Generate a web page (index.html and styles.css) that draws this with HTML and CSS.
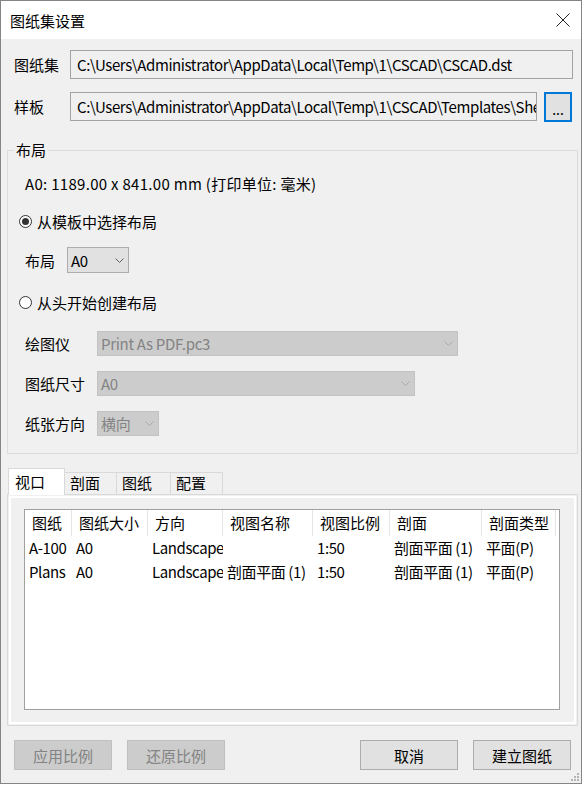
FILE: index.html
```html
<!DOCTYPE html>
<html lang="zh-CN">
<head>
    <meta charset="UTF-8">
    <title>图纸集设置</title>
    <link rel="stylesheet" href="styles.css">
</head>
<body>
<div class="window">

    <!-- Barra de título -->
    <div class="titlebar">
        <span class="title">图纸集设置</span>
        <svg class="close" width="14" height="14" viewBox="0 0 14 14">
            <path d="M0.5 0.5 L13.5 13.5 M13.5 0.5 L0.5 13.5" stroke="#222" stroke-width="1" fill="none"/>
        </svg>
    </div>

    <!-- Rutas -->
    <div class="path-row first">
        <span class="path-label">图纸集</span>
        <div class="path-box wide">C:\Users\Administrator\AppData\Local\Temp\1\CSCAD\CSCAD.dst</div>
    </div>
    <div class="path-row">
        <span class="path-label">样板</span>
        <div class="path-box narrow">C:\Users\Administrator\AppData\Local\Temp\1\CSCAD\Templates\Sheet.dwt</div>
        <button class="browse">...</button>
    </div>

    <!-- Grupo de layout -->
    <fieldset class="group">
        <legend>布局</legend>
        <div class="group-body">
            <div class="g-row info">A0: 1189.00 x 841.00 mm (打印单位: 毫米)</div>
            <div class="g-row radio-row r-first"><span class="radio checked"></span>从模板中选择布局</div>
            <div class="g-row field-row tall">
                <span class="f-label short">布局</span>
                <div class="combo small">A0<svg class="chev" width="9" height="5" viewBox="0 0 9 5"><path d="M0.5 0.5 L4.5 4.5 L8.5 0.5" stroke="#606060" fill="none"/></svg></div>
            </div>
            <div class="g-row radio-row tall"><span class="radio"></span>从头开始创建布局</div>
            <div class="g-row field-row">
                <span class="f-label">绘图仪</span>
                <div class="combo disabled plotter">Print As PDF.pc3<svg class="chev" width="9" height="5" viewBox="0 0 9 5"><path d="M0.5 0.5 L4.5 4.5 L8.5 0.5" stroke="#a8a8a8" fill="none"/></svg></div>
            </div>
            <div class="g-row field-row">
                <span class="f-label">图纸尺寸</span>
                <div class="combo disabled paper">A0<svg class="chev" width="9" height="5" viewBox="0 0 9 5"><path d="M0.5 0.5 L4.5 4.5 L8.5 0.5" stroke="#a8a8a8" fill="none"/></svg></div>
            </div>
            <div class="g-row field-row">
                <span class="f-label">纸张方向</span>
                <div class="combo disabled small">横向<svg class="chev" width="9" height="5" viewBox="0 0 9 5"><path d="M0.5 0.5 L4.5 4.5 L8.5 0.5" stroke="#a8a8a8" fill="none"/></svg></div>
            </div>
        </div>
    </fieldset>

    <!-- Pestañas -->
    <div class="tabs">
        <div class="tab active">视口</div>
        <div class="tab t2">剖面</div>
        <div class="tab t3">图纸</div>
        <div class="tab t4">配置</div>
    </div>
    <div class="tab-panel">
        <div class="list">
            <div class="list-head">
                <span>图纸</span><span>图纸大小</span><span>方向</span><span>视图名称</span><span>视图比例</span><span>剖面</span><span>剖面类型</span>
            </div>
            <div class="list-row">
                <span>A-100</span><span>A0</span><span>Landscape</span><span></span><span>1:50</span><span>剖面平面 (1)</span><span>平面(P)</span>
            </div>
            <div class="list-row">
                <span>Plans</span><span>A0</span><span>Landscape</span><span>剖面平面 (1)</span><span>1:50</span><span>剖面平面 (1)</span><span>平面(P)</span>
            </div>
        </div>
    </div>

    <!-- Botones -->
    <div class="actions">
        <button class="btn" disabled>应用比例</button>
        <button class="btn" disabled>还原比例</button>
        <span class="spacer"></span>
        <button class="btn">取消</button>
        <button class="btn">建立图纸</button>
    </div>

    <svg class="grip" width="10" height="10" viewBox="0 0 10 10">
        <rect x="7" y="1" width="2" height="2" fill="#b4b4b4"/>
        <rect x="4" y="4" width="2" height="2" fill="#b4b4b4"/>
        <rect x="7" y="4" width="2" height="2" fill="#b4b4b4"/>
        <rect x="1" y="7" width="2" height="2" fill="#b4b4b4"/>
        <rect x="4" y="7" width="2" height="2" fill="#b4b4b4"/>
        <rect x="7" y="7" width="2" height="2" fill="#b4b4b4"/>
    </svg>
</div>
</body>
</html>
```

FILE: styles.css
```css
body {
    margin: 0;
    background-color: #fff;
    font-family: "Noto Sans CJK SC", sans-serif;
    font-size: 15px;
    color: #000;
}

.window {
    position: relative;
    width: 582px;
    height: 784px;
    box-sizing: border-box;
    border: 1px solid #858585;
    background-color: #f0f0f0;
    display: flex;
    flex-direction: column;
}

.titlebar {
    height: 38px;
    flex: none;
    background-color: #fff;
    display: flex;
    align-items: center;
    justify-content: space-between;
    padding: 0 11px 0 9px;
}

.close {
    display: block;
}

.path-row {
    display: flex;
    align-items: center;
    height: 29px;
    margin: 13px 0 0 13px;
    flex: none;
}

.path-row.first {
    margin-top: 11px;
}

.path-label {
    width: 56px;
}

.path-box {
    height: 29px;
    box-sizing: border-box;
    border: 1px solid #a3a3a3;
    padding-left: 6px;
    line-height: 27px;
    white-space: nowrap;
    overflow: hidden;
    letter-spacing: -0.4px;
}

.path-box.wide {
    width: 503px;
}

.path-box.narrow {
    width: 467px;
}

.browse {
    margin-left: 7px;
    width: 28px;
    height: 30px;
    box-sizing: border-box;
    border: 2px solid #0078d7;
    background-color: #e1e1e1;
    font-family: inherit;
    font-size: 14px;
    padding: 4px 0 0;
    line-height: 1;
}

.group {
    margin: 19px 0 0 6px;
    padding: 0 0 10px 0;
    width: 571px;
    box-sizing: border-box;
    border: 1px solid #dcdcdc;
    flex: none;
}

.group legend {
    margin-left: 6px;
    padding: 0 2px;
    line-height: 20px;
}

.group-body {
    padding-top: 3px;
}

.g-row {
    display: flex;
    align-items: center;
    height: 40px;
    margin-left: 17px;
}

.info {
    letter-spacing: 0.3px;
}

.radio-row {
    margin-left: 11px;
}

.r-first {
    height: 36px;
}

.tall {
    height: 42px;
}

.radio {
    width: 13px;
    height: 13px;
    box-sizing: border-box;
    border: 1px solid #333;
    border-radius: 50%;
    margin-right: 5px;
    display: flex;
    align-items: center;
    justify-content: center;
    background-color: #fff;
}

.radio.checked::after {
    content: "";
    width: 7px;
    height: 7px;
    border-radius: 50%;
    background-color: #333;
}

.f-label {
    width: 72px;
}

.f-label.short {
    width: 42px;
}

.combo {
    height: 25px;
    box-sizing: border-box;
    border: 1px solid #adadad;
    background-color: #e1e1e1;
    display: flex;
    align-items: center;
    justify-content: space-between;
    padding: 0 4px 0 3px;
    white-space: nowrap;
    letter-spacing: -0.3px;
}

.combo.small {
    width: 62px;
}

.field-row.tall .combo {
    height: 26px;
}

.combo.disabled {
    background-color: #cccccc;
    border-color: #c2c2c2;
    color: #838383;
}

.combo.plotter {
    width: 361px;
}

.combo.paper {
    width: 318px;
}

.chev {
    display: block;
}

.tabs {
    display: flex;
    align-items: flex-end;
    margin: 14px 0 0 7px;
    height: 26px;
    flex: none;
    position: relative;
    z-index: 1;
}

.tab {
    height: 22px;
    box-sizing: border-box;
    border: 1px solid #d9d9d9;
    border-bottom: none;
    background-color: #f0f0f0;
    padding-left: 5px;
    line-height: 20px;
    margin-left: -1px;
}

.tab.active {
    height: 27px;
    margin-bottom: -1px;
    margin-left: 0;
    width: 57px;
    background-color: #fff;
    padding: 3px 0 0 6px;
}

.tab.t2 {
    width: 53px;
}

.tab.t3 {
    width: 55px;
}

.tab.t4 {
    width: 53px;
}

.tab-panel {
    margin-left: 6px;
    width: 571px;
    height: 232px;
    box-sizing: border-box;
    border: 1px solid #d9d9d9;
    background-color: #f0f0f0;
    box-shadow: inset 0 0 0 1px #f0f0f0, inset 0 0 0 3px #fff;
    padding: 14px 0 0 16px;
    flex: none;
}

.list {
    width: 536px;
    height: 201px;
    box-sizing: border-box;
    border: 1px solid #a0a0a0;
    background-color: #fff;
}

.list-head,
.list-row {
    display: grid;
    grid-template-columns: 47px 76px 75px 90px 77px 92px 74px;
}

.list-head {
    height: 26px;
    line-height: 26px;
}

.list-head span {
    border-right: 1px solid #e5e5e5;
    padding-left: 7px;
    white-space: nowrap;
    overflow: hidden;
}

.list-row {
    height: 24px;
    line-height: 24px;
    letter-spacing: -0.4px;
}

.list-row span {
    padding-left: 4px;
    white-space: nowrap;
    overflow: hidden;
}

.actions {
    display: flex;
    align-items: center;
    margin: 14px 10px 0 13px;
    gap: 15px;
    flex: none;
}

.spacer {
    flex: 1;
}

.btn {
    width: 98px;
    height: 30px;
    box-sizing: border-box;
    border: 1px solid #adadad;
    background-color: #e1e1e1;
    font-family: inherit;
    font-size: 15px;
    color: #000;
    padding: 0;
}

.btn:disabled {
    background-color: #cccccc;
    border-color: #bfbfbf;
    color: #838383;
}

.grip {
    position: absolute;
    right: 1px;
    bottom: 1px;
}
```
